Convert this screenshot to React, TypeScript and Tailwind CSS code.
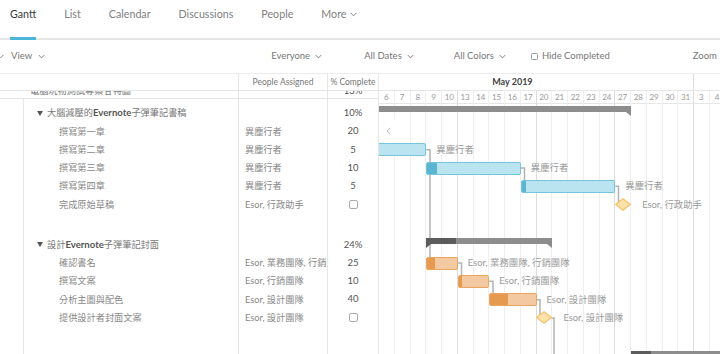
import React from 'react'

const COL = 15.75
const DAYS = [6, 7, 8, 9, 10, 13, 14, 15, 16, 17, 20, 21, 22, 23, 24, 27, 28, 29, 30, 31, 3, 4]
const FRI = new Set([10, 17, 24, 31])

type Tone = 'blue' | 'orange'
type Row =
  | { kind: 'top' }
  | { kind: 'pad'; h: string }
  | { kind: 'group'; pre: string; latin: string; post: string; pct: string; from: number; to: number; done: number }
  | {
      kind: 'task'
      name: string
      people: string
      pct?: string
      tone?: Tone
      from?: number
      to?: number
      done?: number
      ms?: number
      label?: string
      more?: boolean
    }
  | { kind: 'blank' }

const ROWS: Row[] = [
  { kind: 'top' },
  { kind: 'pad', h: 'h-[5px]' },
  { kind: 'group', pre: '大腦減壓的', latin: 'Evernote', post: '子彈筆記書稿', pct: '10%', from: -10, to: 16, done: 10 },
  { kind: 'task', name: '撰寫第一章', people: '異塵行者', pct: '20', more: true },
  { kind: 'task', name: '撰寫第二章', people: '異塵行者', pct: '5', tone: 'blue', from: -3, to: 3, done: 5, label: '異塵行者' },
  { kind: 'task', name: '撰寫第三章', people: '異塵行者', pct: '10', tone: 'blue', from: 3, to: 9, done: 10, label: '異塵行者' },
  { kind: 'task', name: '撰寫第四章', people: '異塵行者', pct: '5', tone: 'blue', from: 9, to: 15, done: 5, label: '異塵行者' },
  { kind: 'task', name: '完成原始草稿', people: 'Esor, 行政助手', ms: 15, label: 'Esor, 行政助手' },
  { kind: 'blank' },
  { kind: 'pad', h: 'h-[3.5px]' },
  { kind: 'group', pre: '設計', latin: 'Evernote', post: '子彈筆記封面', pct: '24%', from: 3, to: 11, done: 24 },
  { kind: 'task', name: '確認書名', people: 'Esor, 業務團隊, 行銷團隊', pct: '25', tone: 'orange', from: 3, to: 5, done: 25, label: 'Esor, 業務團隊, 行銷團隊' },
  { kind: 'task', name: '撰寫文案', people: 'Esor, 行銷團隊', pct: '10', tone: 'orange', from: 5, to: 7, done: 10, label: 'Esor, 行銷團隊' },
  { kind: 'task', name: '分析主圖與配色', people: 'Esor, 設計團隊', pct: '40', tone: 'orange', from: 7, to: 10, done: 40, label: 'Esor, 設計團隊' },
  { kind: 'task', name: '提供設計者封面文案', people: 'Esor, 設計團隊', ms: 10, label: 'Esor, 設計團隊' },
  { kind: 'blank' },
  { kind: 'pad', h: 'h-[3.5px]' },
  { kind: 'group', pre: '', latin: '', post: '', pct: '', from: 16, to: 30, done: 9 },
]

const rowH = (r: Row) => (r.kind === 'top' ? 'h-[19px] -mt-[11px]' : r.kind === 'pad' ? r.h : 'h-[18.3px]')

function Chev({ className = '' }: { className?: string }) {
  return (
    <svg className={`shrink-0 ${className}`} width="7" height="5" viewBox="0 0 7 5">
      <path d="M0.6 0.9 L3.5 3.9 L6.4 0.9" fill="none" stroke="#888" strokeWidth="1" />
    </svg>
  )
}

function Checkbox() {
  return <span className="inline-block h-[9px] w-[9px] rounded-[2px] border border-[#aaa] bg-white" />
}

function LeftRow({ r }: { r: Row }) {
  const h = rowH(r)
  if (r.kind === 'top')
    return (
      <div className={`flex ${h} border-b border-[#e6e6e6]`}>
        <div className="flex w-[239px] shrink-0 items-end border-r border-[#e6e6e6] pb-[1px] pl-[30px] text-[9.2px] leading-[12px] text-[#777]">
          電腦玩物測試專案甘特圖
        </div>
        <div className="w-[89px] shrink-0 border-r border-[#e6e6e6]" />
        <div className="flex w-[51px] shrink-0 items-end justify-center border-r border-[#e6e6e6] pb-[1px] text-[9.5px] leading-[12px] text-[#555]">
          13%
        </div>
      </div>
    )

  let name: React.ReactNode = null
  let people = ''
  let pct: React.ReactNode = null
  if (r.kind === 'group') {
    if (r.latin) {
      name = (
        <div className="flex items-center pl-[13px]">
          <svg width="6" height="5" viewBox="0 0 6 5">
            <polygon points="0,0 6,0 3,5" fill="#555" />
          </svg>
          <span className="ml-[4px] text-[9.2px] text-[#777]">
            {r.pre}
            <span className="text-[9.6px] font-bold text-[#555]">{r.latin}</span>
            {r.post}
          </span>
        </div>
      )
    }
    pct = <span className="text-[9.5px] text-[#555]">{r.pct}</span>
  } else if (r.kind === 'task') {
    name = <span className="pl-[35px] text-[9.2px] text-[#888]">{r.name}</span>
    people = r.people
    pct = r.pct ? <span className="text-[9.5px] text-[#555]">{r.pct}</span> : <Checkbox />
  }

  return (
    <div className={`flex ${h}`}>
      <div className="w-[239px] shrink-0 border-r border-[#e6e6e6]">
        <div className="ml-[23px] flex h-full items-center whitespace-nowrap border-l border-[#e6e6e6]">{name}</div>
      </div>
      <div className="flex w-[89px] shrink-0 items-center overflow-hidden whitespace-nowrap border-r border-[#e6e6e6] pl-[6px] text-[9.2px] text-[#888]">
        {people}
      </div>
      <div className="flex w-[51px] shrink-0 items-center justify-center border-r border-[#e6e6e6]">{pct}</div>
    </div>
  )
}

function ChartRow({ r }: { r: Row }) {
  const h = rowH(r)
  if (r.kind === 'group') {
    return (
      <div className={`relative ${h}`}>
        <div className="absolute top-[2px] h-[6px] bg-[#8d8d8d]" style={{ left: r.from * COL, width: (r.to - r.from) * COL }}>
          <div className="h-full bg-[#5c5c5c]" style={{ width: `${r.done}%` }} />
          <svg className="absolute left-0 top-full" width="5" height="4" viewBox="0 0 5 4">
            <polygon points="0,0 5,0 0,4" fill="#5c5c5c" />
          </svg>
          <svg className="absolute right-0 top-full" width="5" height="4" viewBox="0 0 5 4">
            <polygon points="0,0 5,0 5,4" fill="#8d8d8d" />
          </svg>
        </div>
      </div>
    )
  }
  if (r.kind !== 'task') return <div className={h} />

  const blue = r.tone === 'blue'
  return (
    <div className={`relative ${h}`}>
      {r.more && (
        <div className="absolute left-0 top-[-3px] flex h-[24px] w-[24px] items-center bg-white pl-[7px]">
          <svg width="5" height="8" viewBox="0 0 5 8">
            <path d="M4 0.8 L1 4 L4 7.2" fill="none" stroke="#bbb" strokeWidth="1" />
          </svg>
        </div>
      )}
      {r.from !== undefined && r.to !== undefined && (
        <>
          <div
            className={`absolute top-[2.65px] h-[13px] overflow-hidden rounded-[2px] border ${
              blue ? 'border-[#74c4dc] bg-[#bae4ef]' : 'border-[#eaa560] bg-[#f2c9a0]'
            }`}
            style={{ left: r.from * COL, width: (r.to - r.from) * COL }}
          >
            <div className={`h-full ${blue ? 'bg-[#5ab5d3]' : 'bg-[#e59a50]'}`} style={{ width: `${r.done}%` }} />
          </div>
          <span
            className="absolute top-0 flex h-full items-center whitespace-nowrap text-[9.4px] text-[#999]"
            style={{ left: r.to * COL + 10 }}
          >
            {r.label}
          </span>
        </>
      )}
      {r.ms !== undefined && (
        <>
          <svg className="absolute top-[2.65px]" style={{ left: (r.ms + 0.5) * COL - 8 }} width="16" height="13" viewBox="0 0 16 13">
            <polygon points="8,0.8 15.2,6.5 8,12.2 0.8,6.5" fill="#fde2a9" stroke="#f6c46c" strokeWidth="1.3" />
          </svg>
          <span
            className="absolute top-0 flex h-full items-center whitespace-nowrap text-[9.4px] text-[#999]"
            style={{ left: (r.ms + 0.5) * COL + 19 }}
          >
            {r.label}
          </span>
        </>
      )}
    </div>
  )
}

const TABS = ['Gantt', 'List', 'Calendar', 'Discussions', 'People', 'More']

export default function App() {
  return (
    <div className="flex h-[354px] w-[720px] flex-col overflow-hidden bg-white font-[Lato,'Noto_Sans_CJK_TC',sans-serif]">
      {/* tabs */}
      <nav className="flex h-[40px] shrink-0 items-start gap-[28px] border-b-2 border-[#e6e6e6] pl-[10px] text-[10.7px] text-[#808080]">
        {TABS.map((t) => (
          <div key={t} className={`pt-[7px] ${t === 'Gantt' ? 'h-[40px] border-b-[3px] border-[#4cb6d9] text-[#3a3a3a]' : ''}`}>
            <span className="flex items-center gap-[4px] leading-[14px]">
              {t}
              {t === 'More' && <Chev />}
            </span>
          </div>
        ))}
      </nav>

      {/* toolbar */}
      <div className="flex h-[34px] shrink-0 items-center overflow-hidden whitespace-nowrap border-b border-[#ececec] text-[9.5px] text-[#777]">
        <Chev className="-ml-[3px]" />
        <span className="ml-[7px]">View</span>
        <Chev className="ml-[6px]" />
        <span className="ml-[226px]">Everyone</span>
        <Chev className="ml-[5px]" />
        <span className="ml-[42px]">All Dates</span>
        <Chev className="ml-[5px]" />
        <span className="ml-[40px]">All Colors</span>
        <Chev className="ml-[5px]" />
        <span className="ml-[25px] h-[7px] w-[7px] shrink-0 rounded-[1.5px] border border-[#999]" />
        <span className="ml-[4px]">Hide Completed</span>
        <span className="ml-[83px]">Zoom</span>
        <Chev className="ml-[4px]" />
      </div>

      <div className="flex min-h-0 flex-1">
        {/* task table */}
        <div className="flex w-[379px] shrink-0 flex-col">
          <div className="flex h-[17px] shrink-0 border-b border-[#e6e6e6] text-[8.5px] text-[#777]">
            <div className="w-[239px] shrink-0 border-r border-[#e6e6e6]" />
            <div className="flex w-[89px] shrink-0 items-center justify-center border-r border-[#e6e6e6]">People Assigned</div>
            <div className="flex w-[51px] shrink-0 items-center justify-center border-r border-[#e6e6e6]">% Complete</div>
          </div>
          <div className="min-h-0 flex-1 overflow-hidden">
            {ROWS.map((r, i) => (
              <LeftRow key={i} r={r} />
            ))}
          </div>
        </div>

        {/* gantt */}
        <div className="flex min-w-0 flex-1 flex-col">
          <div className="flex h-[17px] shrink-0 overflow-hidden border-b border-[#e6e6e6] text-[9px] font-bold text-[#444]">
            <div className="-ml-[47.25px] flex w-[362.25px] shrink-0 items-center justify-center border-r border-[#dcdcdc]">May 2019</div>
            <div className="flex w-[200px] shrink-0 items-center justify-center">June 2019</div>
          </div>
          <div className="relative min-h-0 flex-1 overflow-hidden">
            <div className="flex h-full">
              {DAYS.map((d, i) => (
                <div
                  key={i}
                  className={`h-full w-[15.75px] shrink-0 border-r ${FRI.has(d) ? 'border-[#dddddd]' : 'border-[#efefef]'}`}
                >
                  <div className="h-[13px] border-b border-[#e6e6e6] text-center text-[8px] leading-[12px] text-[#999]">{d}</div>
                </div>
              ))}
            </div>
            <svg className="absolute inset-0" width="341" height="263">
              <g fill="none" stroke="#b3b3b3" strokeWidth="1.5">
                <path d="M47.25 58.75 H51 V166" />
                <path d="M141.75 77.05 H145.5 V89" />
                <path d="M236.25 95.35 H239.5 V113" />
                <path d="M78.75 172.05 H82.5 V184" />
                <path d="M110.25 190.35 H114 V202" />
                <path d="M157.5 208.65 H161 V227" />
                <path d="M172.5 226.95 H175 V270" />
              </g>
            </svg>
            <div className="absolute inset-0 overflow-hidden">
              {ROWS.map((r, i) => (
                <ChartRow key={i} r={r} />
              ))}
            </div>
          </div>
        </div>
      </div>
    </div>
  )
}
